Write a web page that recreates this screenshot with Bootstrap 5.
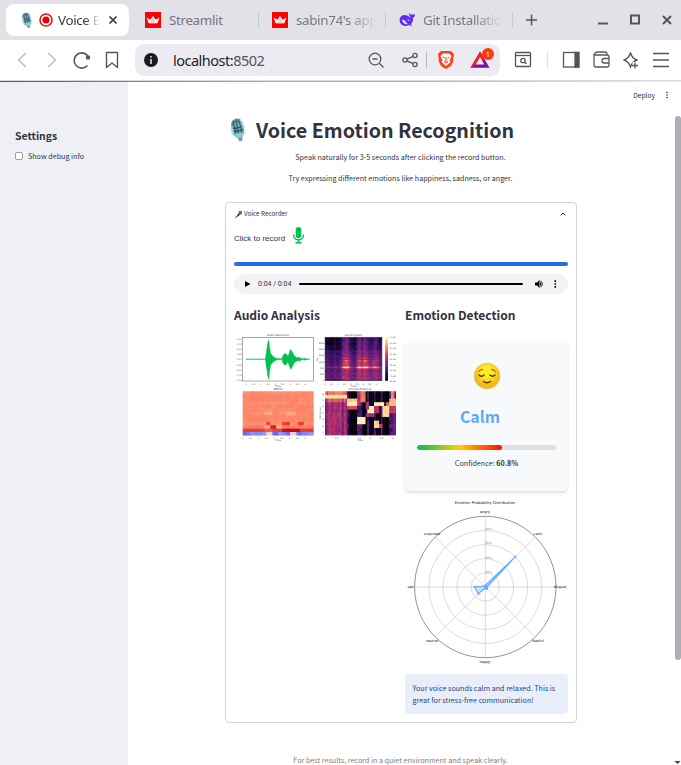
<!DOCTYPE html>
<html lang="en">
<head>
<meta charset="utf-8">
<meta name="viewport" content="width=device-width, initial-scale=1">
<title>Voice Emotion Recognition</title>
<link href="https://cdn.jsdelivr.net/npm/bootstrap@5.3.0/dist/css/bootstrap.min.css" rel="stylesheet">
<style>
body{width:681px;height:765px;overflow:hidden;background:#fff;color:#31333f;font-family:"Noto Sans CJK SC","Noto Sans",sans-serif;font-size:7.16px;line-height:12px}
svg{display:block;flex:none}
.tabstrip{height:40px;background:#e2e1e7;font:13.4px/20px "Noto Sans","Open Sans",sans-serif;color:#77757d}
.tab-on{width:123px;height:32px;margin:4px 0 0 6px;background:#fff;border-radius:8px;color:#3b3a40;padding-left:14px}
.tab-off{width:127px;height:40px;padding-left:16px}
.tab-label{overflow:hidden;white-space:nowrap;letter-spacing:-.35px}
.fade-r{-webkit-mask-image:linear-gradient(90deg,#000 65%,transparent);mask-image:linear-gradient(90deg,#000 65%,transparent)}
.sep{width:1px;height:16px;background:#c9c8cf;margin:0 -3px 0 auto}
.toolbar-row{height:40px;background:#fff}
.address{width:365px;height:32px;margin-left:14px;background:#ecebf2;border-radius:9px;font:14.5px/20px "Noto Sans",sans-serif;color:#1f1e25}
.topline{height:2px;border-top:1px solid #d9d8df;background:linear-gradient(90deg,#e8113f,#ff8c4b 35%,#f6a04e 60%,#fffd80)}
.side{width:128px;background:#eff0f6;padding:47px 0 0 15px}
.side-title{font-size:10.4px;line-height:14px;font-weight:700}
.box{width:8px;height:8px;border:1px solid #9d9ea8;border-radius:2px;background:#fff}
.scroll{width:7px;padding-top:34px}
.thumb{height:544px;width:6px;margin-left:1px;border-radius:4px;background:#aeadb3}
.deploy{height:26px;padding-right:5px}
.page-title{font-size:19.65px;line-height:26px;font-weight:700;height:26px;margin-top:9px;white-space:nowrap}
.block{width:352px}
.intro{line-height:12px;margin-top:9px;height:12px;padding-right:1px;white-space:nowrap}
.page-title + .intro{margin-top:8px}
.panel{height:521px;margin-top:18px;border:1px solid #d3d3d6;border-radius:4px;padding:0 8px}
.rec{font:8px/12px "Liberation Sans",sans-serif}
.bluebar{height:4px;border-radius:2px;background:#226ce4}
.player{height:20px;border-radius:10px;background:#f1f3f4;font:7px/12px Roboto,sans-serif}
.sub{font-size:12.05px;line-height:18px;font-weight:700;white-space:nowrap}
.col-half{width:163px}
.result{height:150px;background:#f8f9fb;border-radius:5px;box-shadow:0 2px 3px rgba(0,0,0,.12);padding:20px 12px 0}
.mood{font-size:15.9px;line-height:22px;font-weight:700;color:#5eaafa;padding-right:13px}
.meter{height:5px;border-radius:3px;background:#e0e0e0;overflow:hidden}
.meter-fill{height:5px;border-radius:3px;background:linear-gradient(90deg,#00bf54,#ffcf00 50%,#ff0a00)}
.tip{height:40px;background:#e8effb;border-radius:4px;color:#234486;padding:7.5px 7.5px;white-space:nowrap}
.foot{color:#808080;margin-top:31px;padding-right:1px;white-space:nowrap}
.plot{font-family:"DejaVu Sans",sans-serif;fill:#444}
</style>
<script src="https://cdn.jsdelivr.net/npm/bootstrap@5.3.0/dist/js/bootstrap.bundle.min.js"></script>
</head>
<body>
<svg width="0" height="0" class="position-absolute">
<defs>
<g id="studio-mic"><g transform="rotate(-12 10 12)"><path d="M7 18h6l-1 6H9z" fill="#6ba6b2"/><rect x="4" y="1" width="12" height="19" rx="6" fill="#70adba"/><path d="M5 6q5-5 10 0M5 10h10M5 13h10M7 2v14M10 1v15M13 2v14" stroke="#36545f" stroke-width="1" fill="none"/><path d="M4 9v7M14 3q2 3 2 9" stroke="#a6dce4" stroke-width="2" fill="none"/><path d="M5 16h10l-2 4H7z" fill="#8acbd5"/></g></g>
<g id="crown"><path d="M0 0h16v16H0z" fill="#fa0303"/><path d="M1.5 5.5 5.3 7.7 8 4l2.7 3.7 3.8-2.2-2.2 5.8H3.7z" fill="#fff"/><path d="M8 4l2.5 7.3H5.5z" fill="#ffc8c8"/></g>
</defs>
</svg>

<div class="tabstrip d-flex">
  <div class="tab-on d-flex align-items-center">
    <svg width="14" height="17" viewBox="0 0 20 25"><use href="#studio-mic"/></svg>
    <svg class="ms-1" width="16" height="16"><circle cx="8" cy="8" r="6" fill="none" stroke="#e51616" stroke-width="1.6"/><circle cx="8" cy="8" r="3.5" fill="#e80000"/></svg>
    <div class="tab-label fade-r" style="width:42px;margin-left:4px">Voice E</div>
    <svg style="margin-left:8px" width="10" height="10"><path d="M1.5 1.5l7 7m0-7l-7 7" stroke="#3b3a40" stroke-width="1.7"/></svg>
  </div>
  <div class="tab-off d-flex align-items-center"><svg width="16" height="16"><use href="#crown"/></svg><div class="tab-label ms-2" style="width:79px">Streamlit</div><div class="sep"></div></div>
  <div class="tab-off d-flex align-items-center"><svg width="16" height="16"><use href="#crown"/></svg><div class="tab-label fade-r ms-2" style="width:81px">sabin74's app</div><div class="sep"></div></div>
  <div class="tab-off d-flex align-items-center"><svg width="16" height="16"><path d="M1 6c-2 6 4 10 9 7l3 1-1-2c2-2 2-4 2-6 1-1 2-2 2-4-1 1-3 0-4 1-1-1-1-2-2-2 0 3 1 3 2 5L9 4C6 2 2 3 1 6z" fill="#5c2cf5"/><path d="M3 8c3-1 4 3 6 4-3 1-5-1-6-4z" fill="#e2e1e7"/><path d="M8.500 7l2 2" stroke="#e2e1e7"/></svg><div class="tab-label fade-r ms-2" style="width:79px">Git Installatio</div><div class="sep"></div></div>
  <svg style="margin-left:8px" width="163" height="40"><g fill="none" stroke="#55545b"><path d="M8 20h11M13.500 14.500v11" stroke-width="1.500"/><path d="M80 23.500h10" stroke-width="2"/><path d="M113 15.500h8v8h-8z" stroke-width="2"/><path d="M145 16l8 8m0-8l-8 8" stroke-width="2"/></g></svg>
</div>

<div class="toolbar-row d-flex align-items-center">
  <svg width="121" height="40" fill="none" stroke="#56555f" stroke-width="1.600"><path d="M26 13l-7.500 7 7.500 7M48 13l7.500 7-7.500 7" stroke="#bbbac1" stroke-width="1.400"/><path d="M87.500 25.500A7.600 7.600 0 1 1 88.500 17"/><circle cx="88" cy="17.500" r="2.200" fill="#56555f" stroke="none"/><path d="M106.500 12.500h11v15l-5.500-4.500-5.500 4.500z" stroke-width="1.400" stroke-linejoin="round"/></svg>
  <div class="address d-flex align-items-center">
    <svg width="38" height="32"><circle cx="16" cy="16" r="7" fill="#1d1b22"/><path d="M16 15v5M16 12v1.600" stroke="#ecebf2" stroke-width="1.500"/></svg>
    <div style="letter-spacing:-.5px">localhost:<span style="color:#55545c">8502</span></div>
    <svg class="ms-auto" width="136" height="32" fill="none" stroke="#56555f" stroke-width="1.300"><circle cx="11" cy="15" r="5.800"/><path d="M15.500 19.500l4 4M8.500 15h5"/><circle cx="41" cy="16" r="2.100"/><circle cx="51" cy="11.500" r="2.100"/><circle cx="51" cy="20.500" r="2.100"/><path d="M42.900 15.200l6.200-2.800M42.900 16.800l6.200 2.800"/><path d="M62.500 8v16" stroke="#b6b5bd" stroke-width="1"/><path d="M77 7h10l3 3-1 8-2 4-5 3-5-3-2-4-1-8z" fill="#f8441c" stroke="none"/><path d="M79 9.500h6l2.500 2.500-2 4.500 1 1.500-4.500 4-4.500-4 1-1.500-2-4.500z" fill="#fff" stroke="none"/><path d="M78.500 13l2 1m5-1l-2 1M82 13v3.500l-1.800 1.300 1.800 1.200 1.800-1.200L82 16.500" stroke="#f8441c" stroke-width="1"/><path d="M116 7.500l9.500 16.200h-19z" fill="#80109a" stroke="none"/><path d="M116 7.500l4.500 7.700-3 2.300-1.500-3-4.500 6-5 3.200z" fill="#fa1c2a" stroke="none"/><path d="M116 13l4.300 7.500h-8.600z" fill="#ecebf2" stroke="none"/></svg>
  </div>
  <svg style="margin-left:14px" width="167" height="40" fill="none" stroke="#56555f" stroke-width="1.300"><rect x="1.500" y="12.500" width="15" height="14" rx="1"/><path d="M1.500 15.500h15"/><circle cx="9" cy="20.500" r="2.200"/><path d="M10.500 22l2 2"/><path d="M33.500 12v16" stroke="#dddce3"/><rect x="49.500" y="12.500" width="15" height="14.500"/><path d="M61 12.500h4v14.500h-4z" fill="#56555f"/><path d="M80 14v11q0 2 2 2h11q2 0 2-2v-8q0-2-2-2H81q-1-3 3-3h7q2 0 2 2.500M95 18.500h-5q-2 0-2 2.300t2 2.200h5"/><path d="M109.500 20q5.500-1 7-7.500 1.500 6.500 7 7.500-5 1-7 7-2-6-7-7z"/><path d="M118.500 22h5v6h-5z" fill="#fff" stroke="none"/><path d="M121 22.500v6M118 25.500h6"/><path d="M139 13.500h16M139 20h16M139 26.500h16" stroke-width="1.600"/></svg>
</div>
<svg class="position-absolute" style="left:481px;top:47px" width="14" height="14"><circle cx="7" cy="7" r="6" fill="#ff3a0b"/><text x="7" y="9.600" font-size="7.500" text-anchor="middle" fill="#fff" font-family="Noto Sans">1</text></svg>
<div class="topline"></div>

<div class="d-flex" style="height:683px">
  <aside class="side flex-shrink-0">
    <div class="side-title">Settings</div>
    <div class="d-flex align-items-center" style="margin-top:7px"><div class="box"></div><div style="margin-left:5px">Show debug info</div></div>
  </aside>
  <main class="d-flex flex-column align-items-center flex-grow-1">
    <div class="deploy flex-shrink-0 d-flex align-items-center align-self-stretch justify-content-end"><span style="font-size:6.700px">Deploy</span><svg style="margin-left:10px" width="4" height="8" fill="#31333f"><circle cx="2" cy="1.500" r=".8"/><circle cx="2" cy="4" r=".8"/><circle cx="2" cy="6.500" r=".8"/></svg></div>
    <div class="block flex-shrink-0">
      <h1 class="page-title d-flex align-items-center mb-0"><svg style="margin:0 8px 0 3px" width="20" height="26" viewBox="0 0 20 25"><use href="#studio-mic"/></svg><span>Voice Emotion Recognition</span></h1>
      <div class="intro text-center">Speak naturally for 3-5 seconds after clicking the record button.</div>
      <div class="intro text-center">Try expressing different emotions like happiness, sadness, or anger.</div>
      <section class="panel">
        <div class="d-flex align-items-center" style="height:22px;font-size:6.300px"><svg width="9" height="9"><path d="M.5 8.500 5 3l1.500 1.500L1.500 8z" fill="#333"/><circle cx="6.300" cy="2.700" r="1.900" fill="#5c7076"/></svg><span style="margin-left:1px">Voice Recorder</span><svg class="ms-auto" style="margin-right:2px" width="6" height="4"><path d="M.6 3.400l2.400-2.400 2.400 2.400" fill="none" stroke="#31333f"/></svg></div>
        <div class="rec d-flex align-items-end" style="height:19px"><span style="margin-bottom:-1px">Click to record</span><svg style="margin:0 0 0 7px" width="13" height="17"><rect x="3.700" width="5.600" height="11" rx="2.800" fill="#00c050"/><path d="M1.500 7.500c0 7 10 7 10 0M6.500 12.500v3M3.500 15.800h6" fill="none" stroke="#00c050" stroke-width="1.400"/></svg></div>
        <div class="bluebar" style="margin-top:18px"></div>
        <div class="player d-flex align-items-center" style="margin-top:8px"><svg style="margin-left:11px" width="6" height="6"><path d="M0 0l5.500 3L0 6z"/></svg><span style="margin-left:7px">0:04 / 0:04</span><div class="flex-grow-1 bg-black" style="height:2px;margin:0 12px 0 8px;border-radius:1px"></div><svg style="margin-right:11px" width="22" height="8"><path d="M0 2.500h2L4.500 0v8L2 5.500H0zM5 2q2 2 0 4z"/><path d="M5.500 .8q3.500 3.200 0 6.400" fill="none" stroke="#000"/><path d="M19.500 .3h1.600v1.600h-1.600zM19.500 3.200h1.600v1.600h-1.600zM19.500 6.100h1.600v1.600h-1.600z"/></svg></div>
        <div class="d-flex" style="gap:8px;margin-top:12px">
          <div class="col-half">
            <div class="sub">Audio Analysis</div>
            <svg style="margin-top:7px" class="plot" id="analysis" width="165" height="114" viewBox="234 331 165 114"></svg>
          </div>
          <div class="col-half">
            <div class="sub">Emotion Detection</div>
            <div class="result text-center" style="margin-top:17px">
              <svg class="mx-auto" width="28" height="30"><defs><radialGradient id="skin" cy=".35"><stop offset=".4" stop-color="#ffec25"/><stop offset="1" stop-color="#f4b81d"/></radialGradient></defs><circle cx="14" cy="15" r="13" fill="url(#skin)" stroke="#d9c98a" stroke-width=".6"/><g fill="none" stroke="#4e3a10" stroke-width="1.500" stroke-linecap="round"><path d="M6 14q2.500 2.500 5 0M17 14q2.500 2.500 5 0M10.500 20.500q3.500 2.500 7 0"/><path d="M5.500 10.500q1.500-2 4-2M22.500 10.500q-1.500-2-4-2" stroke-width=".9"/></g></svg>
              <div class="mood" style="margin-top:15px">Calm</div>
              <div class="meter" style="margin-top:17px"><div class="meter-fill" style="width:60.800%"></div></div>
              <div style="margin-top:7px">Confidence: <b>60.8%</b></div>
            </div>
            <svg class="plot" id="radar" style="margin-top:7px" width="163" height="168" viewBox="405 498 163 168"></svg>
            <div class="tip" style="margin-top:8px">Your voice sounds calm and relaxed. This is<br>great for stress-free communication!</div>
          </div>
        </div>
      </section>
      <div class="foot text-center">For best results, record in a quiet environment and speak clearly.</div>
    </div>
  </main>
  <div class="scroll flex-shrink-0"><div class="thumb"></div><svg style="margin-top:101px" width="7" height="4"><path d="M.5 0h6L3.500 3z" fill="#444"/></svg></div>
</div>

<script>
// Small deterministic noise so the plots are identical on every load.
const rnd = (a, b) => { const v = Math.sin(a * 127.1 + b * 311.7) * 43758.5453; return v - Math.floor(v); };
const ramp = (stops, t) => {
  t = Math.max(0, Math.min(.9999, t)) * (stops.length - 1);
  const i = Math.floor(t), f = t - i;
  return 'rgb(' + stops[i].map((c, k) => Math.round(c + (stops[i + 1][k] - c) * f)) + ')';
};
const MAGMA = [[0,0,4],[50,15,100],[125,35,125],[205,55,90],[250,145,90],[252,240,180]];
const COOL = [[75,65,235],[150,160,255],[235,215,205],[255,180,145],[252,125,95],[225,45,45],[185,0,25]];
const heat = (x, y, w, h, nx, ny, stops, fn) => {
  let s = '<g>';
  for (let j = 0; j < ny; j++) for (let i = 0; i < nx; i++)
    s += `<rect x="${x + i * w / nx}" y="${y + j * h / ny}" width="${w / nx + (i < nx - 1 ? .5 : 0)}" height="${h / ny + (j < ny - 1 ? .5 : 0)}" fill="${ramp(stops, fn(i / nx, j / ny, i, j))}"/>`;
  return s + '</g>';
};
const txt = (x, y, t, size = 2.2, anchor = 'middle') => `<text x="${x}" y="${y}" font-size="${size}" text-anchor="${anchor}">${t}</text>`;
const frame = (x, y, w, h) => `<rect x="${x}" y="${y}" width="${w}" height="${h}" fill="none" stroke="#555" stroke-width=".5"/>`;
let a = '';

// Waveform
const env = [[246,.1],[265.5,.15],[266,5],[267,11],[268,18],[268.6,20],[269.5,13],[270.5,6],[272,4],[274,2],[277,.6],[282,.4],[283,4],[285,6],[286.5,5],[288,3],[289.5,7],[290.5,10],[292,8],[294,4],[296,2],[298,1.2],[299,2.4],[300.5,1],[303,.4],[305,1],[306.5,.4],[309.5,.15]];
a += '<path fill="#04c053" stroke="#04c053" stroke-width=".5" d="M' + env.map(p => p[0] + ' ' + (359.2 - p[1] * .97)).join('L') + 'L' + env.slice().reverse().map(p => p[0] + ' ' + (359.2 + p[1])).join('L') + 'z"/>';
a += frame(242.7, 337.3, 71, 43.7) + txt(278, 336.3, 'Audio Waveform', 2.7);
['1.00','0.75','0.50','0.25','0.00','-0.25','-0.50','-0.75','-1.00'].forEach((t, i) => a += txt(241.5, 339.5 + i * 5.2, t, 2.1, 'end'));

// Spectrogram and its colour bar
const bump = (u, c, w) => Math.exp(-((u - c) ** 2) / (w * w));
a += heat(325, 337.2, 57, 43.6, 50, 34, MAGMA, (u, v, i, j) => {
  const speech = Math.max(bump(u, .36, .07), .9 * bump(u, .59, .05), .95 * bump(u, .7, .07), .55 * bump(u, .86, .09));
  const bands = bump(v, .68, .025) + .65 * bump(v, .54, .02) + .35 * bump(v, .6, .03) + .35 * bump(v, .47, .02);
  return .06 + .22 * v + (v > .95 ? -.15 : 0) + .1 * rnd(i, j) + .05 * rnd(i, 5) + speech * (.2 + .08 * rnd(i, 3) + .55 * bands) + .12 * bump(v, .68, .02) - (v < .28 ? .08 * (1 - speech) : 0);
});
a += heat(385.2, 337.2, 2.800, 43.600, 1, 30, MAGMA, (u, v) => 1 - v);
a += frame(325, 337.2, 57, 43.6) + txt(353.5, 336.3, 'Spectrogram', 2.7);
['8192','4096','2048','1024','512','256','0'].forEach((t, i) => a += txt(324, 344 + i * 6.2, t, 2.1, 'end'));
for (let i = 0; i < 9; i++) a += txt(389, 338.2 + i * 5.5, i ? '-' + i * 10 + ' dB' : '+0 dB', 2, 'start');

// MFCC
a += heat(242.7, 391.3, 71, 44.2, 36, 13, COOL, (u, v, i, j) => {
  if (j === 12) return (u > .31 && u < .4) || (u > .66 && u < .73) ? .34 : .05 + .13 * rnd(i >> 1, j);
  let t = .62 + .04 * rnd(i >> 1, j) - (j % 3 === 0 ? .02 : 0);
  if (j === 6 && ((u > .3 && u < .4) || (u > .6 && u < .75))) t = .54;
  if (j === 9 && ((u > .31 && u < .37) || (u > .54 && u < .64) || (u > .76 && u < .86))) t = .8;
  if (j === 10) t = u > .38 && u < .47 ? .9 : u > .3 && u < .53 ? .55 : t + .02;
  if (j === 11) t = u > .3 && u < .41 ? .74 : u > .53 && u < .78 ? .96 : .8;
  return t;
});
a += txt(278, 390.3, 'MFCCs', 2.7);

// Chroma features: [from x, to x, from row, to row, level]
const blocks = [[.3,.43,2,2,.9],[.3,.43,3,3,1],[.3,.43,4,4,.6],[.43,.55,7,8,1],[.43,.5,0,3,.5],[.5,.55,0,2,.72],[.55,.6,3,4,.5],[.58,.69,4,5,1],[.55,.69,6,6,.45],[.69,.81,3,3,1],[.69,.75,4,5,.5],[.68,.75,8,9,.9],[.75,.8,9,9,.6],[.8,.89,4,6,.92],[.84,.9,3,3,.7],[.89,1,2,3,.85],[.92,.97,0,1,.75],[.9,1,4,5,.55],[.94,1,6,11,.3]];
a += heat(325, 391.3, 71, 44, 42, 12, MAGMA, (u, v, i, j) => {
  if (u < .3) return j === 1 ? .97 : j === 0 ? .6 + .2 * rnd(i, 1) : .3 + .2 * rnd(i, 2) + .12 * rnd(i, j) + (j === 2 ? .15 : 0);
  const b = blocks.find(b => u >= b[0] && u < b[1] && j >= b[2] && j <= b[3]);
  return b ? b[4] + .06 * rnd(i, j) : rnd(i, 9) > .55 ? .18 + .18 * rnd(i, j) : .04 * rnd(i, j);
});
a += txt(360, 390.3, 'Chroma Features', 2.7);
['B','A','G','F','E','D','C'].forEach((t, i) => a += txt(323.8, 394.5 + i * 6.4, t, 2.1, 'end'));
a += '<text transform="translate(320.800 413) rotate(-90)" font-size="2.300" text-anchor="middle">Pitch class</text>';
a += '<text transform="translate(318 359) rotate(-90)" font-size="2.300" text-anchor="middle">Hz</text>';
[[246, 7.35, 384.500], [242.7, 7.8, 438.500], [325, 6.4, 384.500]].forEach(([x, d, y]) => { for (let i = 0; i < 9; i++) a += txt(x + i * d, y, i % 2 ? (i / 2).toFixed(1) : i / 2, 2.1); });
for (let i = 0; i < 7; i++) a += txt(325.5 + i * 11.2, 438.500, i % 2 ? (i / 2).toFixed(1) : i / 2, 2.1);
[[278, 387], [353.5, 387], [278, 441], [360, 441]].forEach(p => a += txt(p[0], p[1], 'Time', 2.3));
document.getElementById('analysis').innerHTML = a;

// Radar chart of class probabilities
const cx = 485.3, cy = 587, R = 70.7;
let r = '<g fill="none" stroke="#c4c4c4" stroke-width=".6">';
[.2, .4, .6, .8].forEach(k => r += `<circle cx="${cx}" cy="${cy}" r="${R * k}"/>`);
for (let i = 0; i < 8; i++) r += `<path d="M${cx} ${cy}L${cx + R * Math.sin(i * Math.PI / 4)} ${cy - R * Math.cos(i * Math.PI / 4)}"/>`;
r += `</g><circle cx="${cx}" cy="${cy}" r="${R}" fill="none" stroke="#666" stroke-width=".7"/>`;
r += '<g fill="#888">' + [20, 40, 60, 80].map((p, i) => txt(488.500, 572.600 - i * 14.100, p + '%', 3)).join('') + '</g>';
const pts = [[485.3,585.500],[515.300,556.700],[487,587],[487,589],[485.300,588],[478.300,593.700],[474.300,586.800],[484.500,586]];
r += `<path d="M${pts.map(p => p.join(' ')).join('L')}z" fill="#60aaff55" stroke="#60aaff" stroke-width="1.100"/>`;
pts.forEach(p => r += `<circle cx="${p[0]}" cy="${p[1]}" r="1.100" fill="#60aaff"/>`);
r += '<g fill="#111">' + txt(485, 504, 'Emotion Probability Distribution', 3.8);
[['angry',485,513],['calm',538,535],['disgust',560,588],['fearful',538,641.500],['happy',485,663],['neutral',432,641.500],['sad',410.500,588],['surprised',432,535]].forEach(l => r += txt(l[1], l[2], l[0], 3.5));
document.getElementById('radar').innerHTML = r + '</g>';
</script>
</body>
</html>
